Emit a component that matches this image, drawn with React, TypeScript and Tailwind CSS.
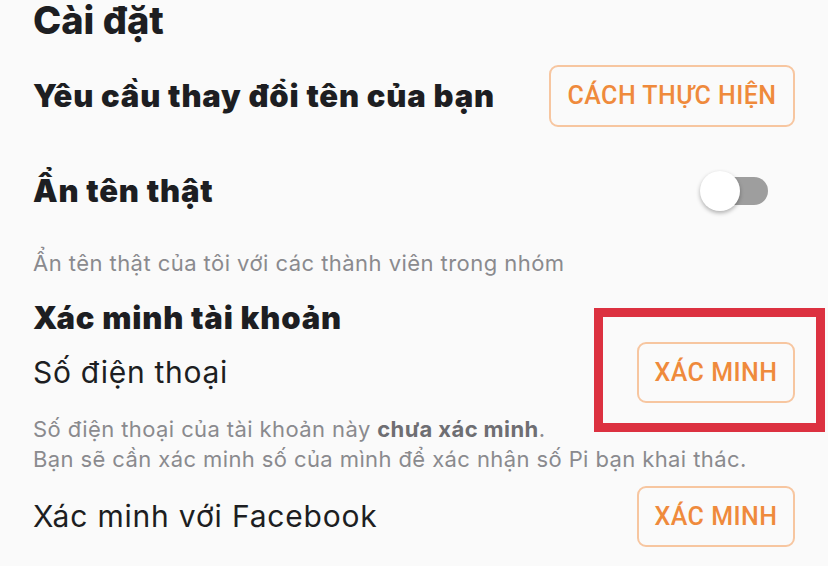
import React from "react";

function OutlineButton({ label, width }: { label: string; width: string }) {
  return (
    <button
      className={`${width} h-[61px] shrink-0 rounded-[9px] border-2 border-[#f7c6a0] bg-transparent font-['Roboto',sans-serif] text-[25px] font-medium tracking-[0.5px] text-[#ef8a3c]`}
    >
      {label}
    </button>
  );
}

function Toggle() {
  return (
    <div className="relative mr-[27px] h-[40px] w-[68px]">
      <div className="absolute right-0 top-[6px] h-[28px] w-[56px] rounded-full bg-[#9e9e9e]" />
      <div className="absolute left-0 top-0 h-[40px] w-[40px] rounded-full bg-white shadow-[0_2px_4px_rgba(0,0,0,0.3)]" />
    </div>
  );
}

export default function App() {
  return (
    <div className="relative h-[566px] w-[828px] overflow-hidden bg-[#fafafa] px-[33px] font-['Inter',sans-serif] text-[#1d1e22]">
      <h1 className="pt-[2px] text-[38px] font-extrabold leading-[36px]">Cài đặt</h1>

      <div className="mt-[27px] flex h-[62px] items-center justify-between">
        <span className="text-[31px] font-black tracking-[0.8px]">Yêu cầu thay đổi tên của bạn</span>
        <OutlineButton label="CÁCH THỰC HIỆN" width="w-[246px] h-[62px]" />
      </div>

      <div className="mt-[33px] flex h-[62px] items-center justify-between">
        <span className="text-[31px] font-black tracking-[0.8px]">Ẩn tên thật</span>
        <Toggle />
      </div>

      <p className="mt-[25px] text-[22px] leading-[32px] tracking-[0.45px] text-[#8a8a8e]">
        Ẩn tên thật của tôi với các thành viên trong nhóm
      </p>

      <h2 className="mt-[21px] text-[31px] font-black leading-[36px] tracking-[0.8px]">Xác minh tài khoản</h2>

      <div className="mt-[6px] flex h-[61px] items-center justify-between">
        <span className="text-[30px] font-normal tracking-[0.7px]">Số điện thoại</span>
        <OutlineButton label="XÁC MINH" width="w-[158px]" />
      </div>

      <p className="mt-[11px] text-[22px] leading-[30px] tracking-[0.4px] text-[#8a8a8e]">
        Số điện thoại của tài khoản này <span className="font-bold text-[#6e6e72]">chưa xác minh</span>.
        <br />
        Bạn sẽ cần xác minh số của mình để xác nhận số Pi bạn khai thác.
      </p>

      <div className="mt-[12px] flex h-[61px] items-center justify-between">
        <span className="text-[30px] font-normal tracking-[0.8px]">Xác minh với Facebook</span>
        <OutlineButton label="XÁC MINH" width="w-[158px]" />
      </div>

      <div className="absolute left-[594px] top-[308px] h-[124px] w-[231px] border-[9px] border-[#dc3140]" />
    </div>
  );
}
